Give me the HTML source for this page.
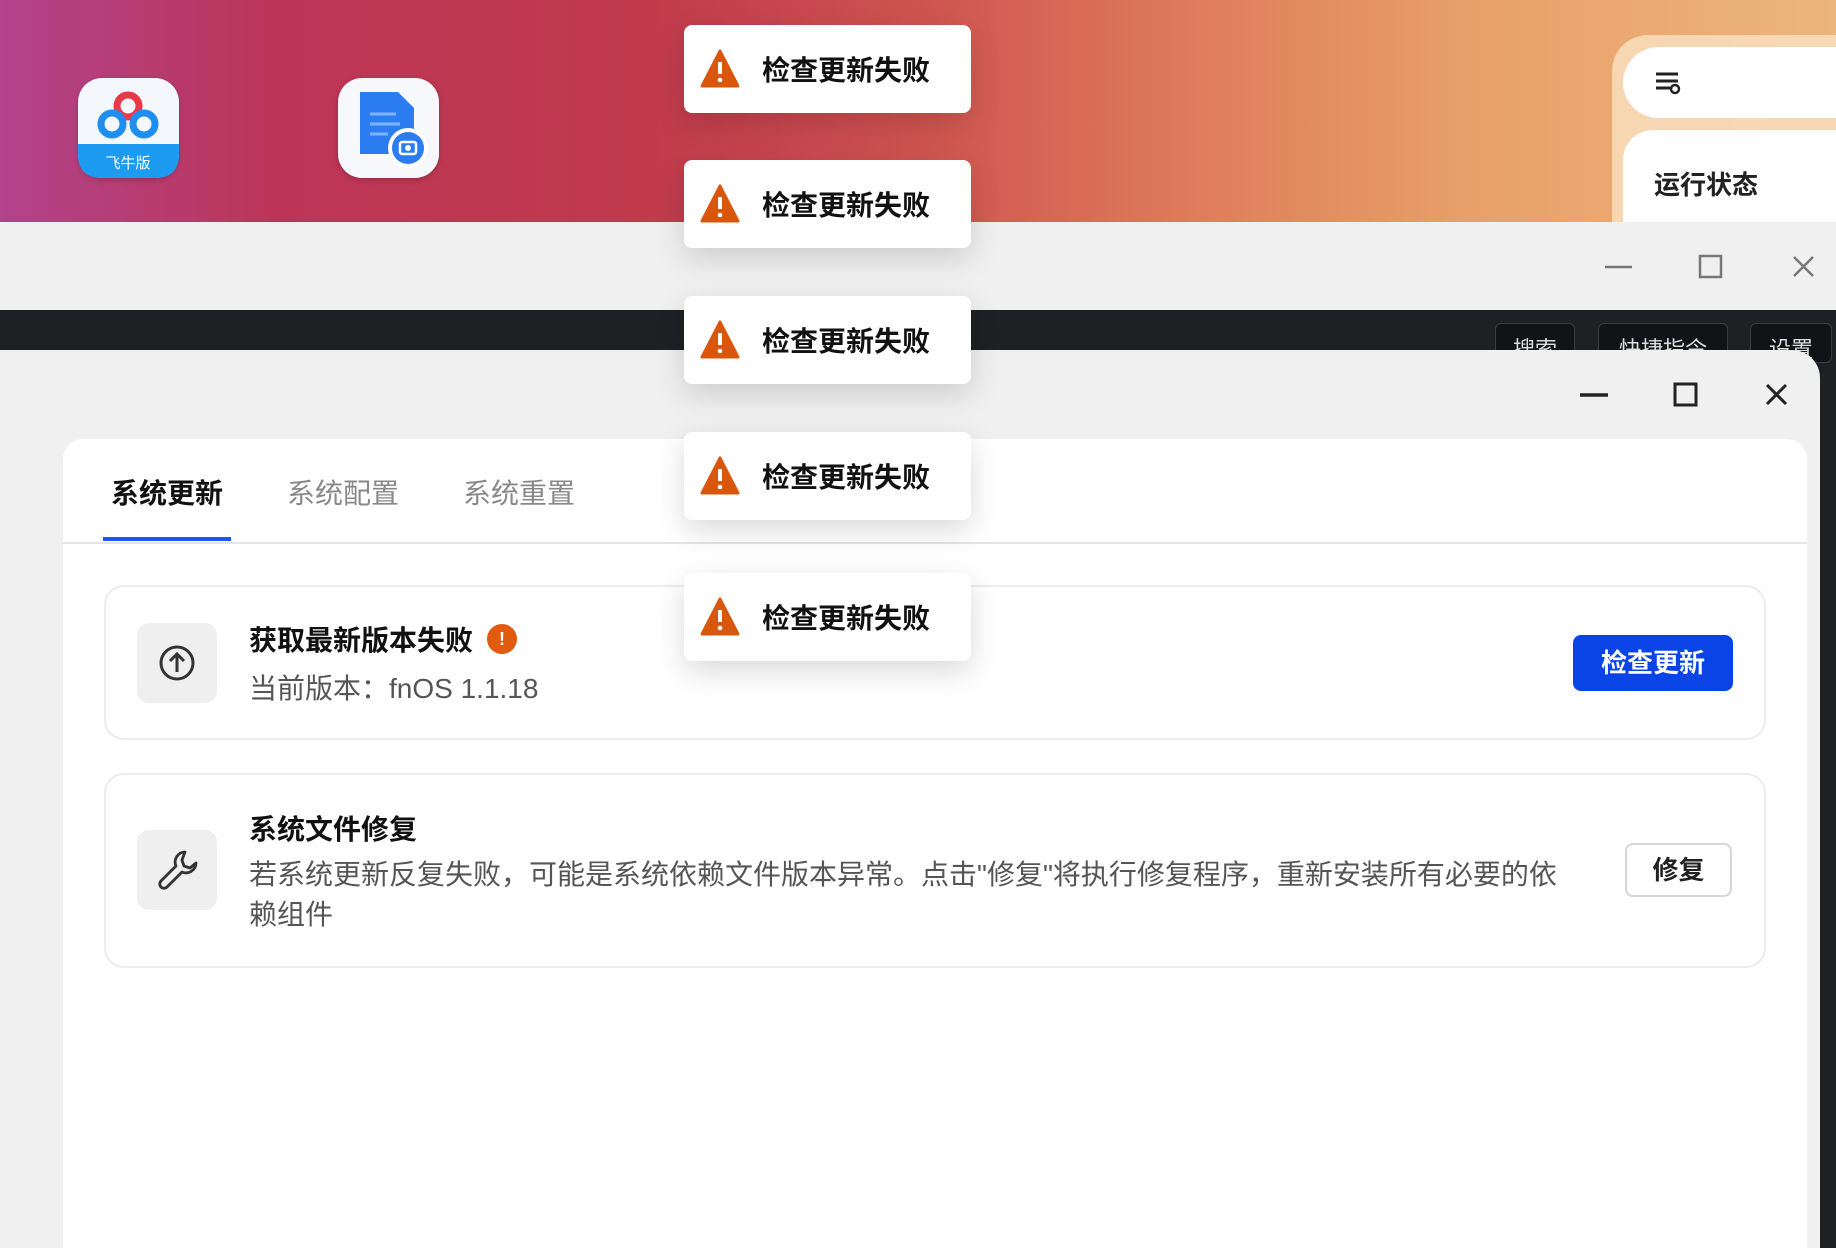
<!DOCTYPE html>
<html><head><meta charset="utf-8"><style>
*{box-sizing:border-box;margin:0;padding:0}
body{width:1836px;height:1248px;overflow:hidden;position:relative;font-family:"Liberation Sans","Noto Sans CJK SC",sans-serif;background:#1e2024}
.abs{position:absolute}
.bg{left:0;top:0;width:1836px;height:230px;background:linear-gradient(90deg,#b2438c 0%,#bc3558 15%,#c03a4c 35%,#cf5350 50%,#df7c5c 65%,#e8a068 80%,#ecb57c 100%)}
.ico{width:101px;height:100px;border-radius:24px;background:#f6f8fb;box-shadow:0 2px 6px rgba(0,0,0,.2)}
.w1{left:0;top:222px;width:1836px;height:90px;background:#f0f0f0}
.bar{left:0;top:310px;width:1836px;height:42px;background:#1e2024}
.dbtn{top:323px;height:40px;background:#121316;border:1px solid #3a3c40;border-radius:6px;color:#ddd;font-size:22px;padding:8px 0 0;text-align:center}
.w2{left:0;top:350px;width:1820px;height:898px;background:#f0f0f0;border-top-right-radius:28px}
.content{left:63px;top:439px;width:1744px;height:809px;background:#fff;border-radius:20px 20px 0 0}
.tab{top:472px;font-size:28px;color:#888}
.card{left:104px;width:1662px;background:#fff;border:2px solid #ececec;border-radius:20px}
.ibox{left:137px;width:80px;height:80px;border-radius:12px;background:#efefef}
.toast{left:684px;width:287px;height:88px;background:#fff;border-radius:8px;box-shadow:0 10px 30px rgba(0,0,0,.15);}
.toast svg{position:absolute;left:16px;top:24px}
.toast span{position:absolute;left:78px;top:24px;font-size:28px;font-weight:bold;color:#111}
</style></head><body>
<div class="abs bg"></div>
<div class="abs ico" style="left:78px;top:78px;background:#f4f7fb">
<svg width="101" height="100" viewBox="0 0 101 100"><circle cx="50" cy="28" r="11" fill="none" stroke="#e8394a" stroke-width="7"/><circle cx="34" cy="46" r="11" fill="none" stroke="#1e8ef0" stroke-width="7"/><circle cx="66" cy="46" r="11" fill="none" stroke="#1e8ef0" stroke-width="7"/><path d="M0 66h101v10q0 24-24 24H24Q0 100 0 76z" fill="#1d9bf0"/><text x="50" y="90" font-size="15" fill="#fff" text-anchor="middle" font-family="Noto Sans CJK SC">飞牛版</text></svg></div>
<div class="abs ico" style="left:338px;top:78px">
<svg width="101" height="100" viewBox="0 0 101 100"><path d="M22 14h38l16 16v46H22z" fill="#2a7cf0"/><path d="M32 36h26M32 46h30M32 56h18" stroke="#7fb3ff" stroke-width="3"/><circle cx="70" cy="70" r="20" fill="#fff"/><circle cx="70" cy="70" r="16" fill="#2a7cf0"/><rect x="62" y="64" width="16" height="12" rx="2" fill="none" stroke="#fff" stroke-width="2.5"/><circle cx="70" cy="70" r="3" fill="#fff"/></svg></div>
<div class="abs" style="left:1612px;top:35px;width:240px;height:200px;background:rgba(250,225,195,.8);border-radius:36px 0 0 0"></div>
<div class="abs" style="left:1623px;top:47px;width:230px;height:71px;background:#fff;border-radius:36px 0 0 36px"><svg class="abs" style="left:31px;top:23px" width="28" height="26"><path d="M2 4h22M2 11h22M2 18h14" stroke="#222" stroke-width="3"/><circle cx="21" cy="19" r="4" fill="none" stroke="#222" stroke-width="2.5"/></svg></div>
<div class="abs" style="left:1623px;top:130px;width:230px;height:110px;background:#fff;border-radius:30px 0 0 0"><div class="abs" style="left:31px;top:35px;font-size:26px;font-weight:bold;color:#222">运行状态</div></div>
<div class="abs w1"></div>
<svg class="abs" style="left:1600px;top:250px" width="230" height="34"><path d="M5 17h27" stroke="#777" stroke-width="2.5"/><rect x="100" y="6" width="21" height="21" fill="none" stroke="#777" stroke-width="2.5"/><path d="M194 7l19 19M213 7l-19 19" stroke="#777" stroke-width="2.5"/></svg>
<div class="abs bar"></div>
<div class="abs dbtn" style="left:1495px;width:80px">搜索</div>
<div class="abs dbtn" style="left:1598px;width:130px">快捷指令</div>
<div class="abs dbtn" style="left:1750px;width:82px">设置</div>
<div class="abs w2"></div>
<svg class="abs" style="left:1575px;top:378px" width="230" height="34"><path d="M5 17h28" stroke="#222" stroke-width="3.5"/><rect x="100" y="6" width="21" height="21" fill="none" stroke="#222" stroke-width="3"/><path d="M192 7l19 19M211 7l-19 19" stroke="#222" stroke-width="3"/></svg>
<div class="abs content"></div>
<div class="abs tab" style="left:111px;color:#111;font-weight:bold">系统更新</div>
<div class="abs tab" style="left:287px">系统配置</div>
<div class="abs tab" style="left:463px">系统重置</div>
<div class="abs" style="left:63px;top:542px;width:1744px;height:2px;background:#e4e4e4"></div>
<div class="abs" style="left:103px;top:537px;width:128px;height:4px;background:#1a56f0"></div>
<div class="abs card" style="top:585px;height:155px"></div>
<div class="abs ibox" style="top:623px"><svg width="80" height="80"><circle cx="40" cy="40" r="16" fill="none" stroke="#333" stroke-width="3"/><path d="M40 49V31M33 38l7-7 7 7" fill="none" stroke="#333" stroke-width="3"/></svg></div>
<div class="abs" style="left:249px;top:619px;font-size:28px;font-weight:bold;color:#111">获取最新版本失败</div>
<div class="abs" style="left:487px;top:624px;width:30px;height:30px;border-radius:50%;background:#e05a10;color:#fff;font-size:18px;font-weight:bold;text-align:center;line-height:30px">!</div>
<div class="abs" style="left:249px;top:667px;font-size:28px;color:#555">当前版本：fnOS 1.1.18</div>
<div class="abs" style="left:1573px;top:635px;width:160px;height:56px;background:#0a44e6;border-radius:8px;color:#fff;font-size:26px;font-weight:bold;text-align:center;line-height:56px">检查更新</div>
<div class="abs card" style="top:773px;height:195px"></div>
<div class="abs ibox" style="top:830px"><svg width="80" height="80" viewBox="0 0 80 80"><path d="M48 22a10 10 0 0 0-9 14L24 51a4 4 0 0 0 6 6l15-15a10 10 0 0 0 14-9l-6 5-6-2-2-6z" fill="none" stroke="#333" stroke-width="2.8" stroke-linejoin="round"/></svg></div>
<div class="abs" style="left:249px;top:808px;font-size:28px;font-weight:bold;color:#111">系统文件修复</div>
<div class="abs" style="left:249px;top:855px;width:1360px;font-size:28px;color:#555;line-height:40px;white-space:nowrap">若系统更新反复失败，可能是系统依赖文件版本异常。点击"修复"将执行修复程序，重新安装所有必要的依<br>赖组件</div>
<div class="abs" style="left:1625px;top:843px;width:107px;height:54px;border:2px solid #d6d6d6;border-radius:8px;color:#222;font-size:26px;font-weight:bold;text-align:center;line-height:50px">修复</div>

<div class="abs toast" style="top:25px"><svg width="40" height="40"><path d="M20 2L38 37H2z" fill="#d9570d" stroke="#d9570d" stroke-width="3" stroke-linejoin="round"/><path d="M20 13v12" stroke="#fff" stroke-width="4"/><circle cx="20" cy="31" r="2.3" fill="#fff"/></svg><span>检查更新失败</span></div>
<div class="abs toast" style="top:160px"><svg width="40" height="40"><path d="M20 2L38 37H2z" fill="#d9570d" stroke="#d9570d" stroke-width="3" stroke-linejoin="round"/><path d="M20 13v12" stroke="#fff" stroke-width="4"/><circle cx="20" cy="31" r="2.3" fill="#fff"/></svg><span>检查更新失败</span></div>
<div class="abs toast" style="top:296px"><svg width="40" height="40"><path d="M20 2L38 37H2z" fill="#d9570d" stroke="#d9570d" stroke-width="3" stroke-linejoin="round"/><path d="M20 13v12" stroke="#fff" stroke-width="4"/><circle cx="20" cy="31" r="2.3" fill="#fff"/></svg><span>检查更新失败</span></div>
<div class="abs toast" style="top:432px"><svg width="40" height="40"><path d="M20 2L38 37H2z" fill="#d9570d" stroke="#d9570d" stroke-width="3" stroke-linejoin="round"/><path d="M20 13v12" stroke="#fff" stroke-width="4"/><circle cx="20" cy="31" r="2.3" fill="#fff"/></svg><span>检查更新失败</span></div>
<div class="abs toast" style="top:573px"><svg width="40" height="40"><path d="M20 2L38 37H2z" fill="#d9570d" stroke="#d9570d" stroke-width="3" stroke-linejoin="round"/><path d="M20 13v12" stroke="#fff" stroke-width="4"/><circle cx="20" cy="31" r="2.3" fill="#fff"/></svg><span>检查更新失败</span></div>
</body></html>
